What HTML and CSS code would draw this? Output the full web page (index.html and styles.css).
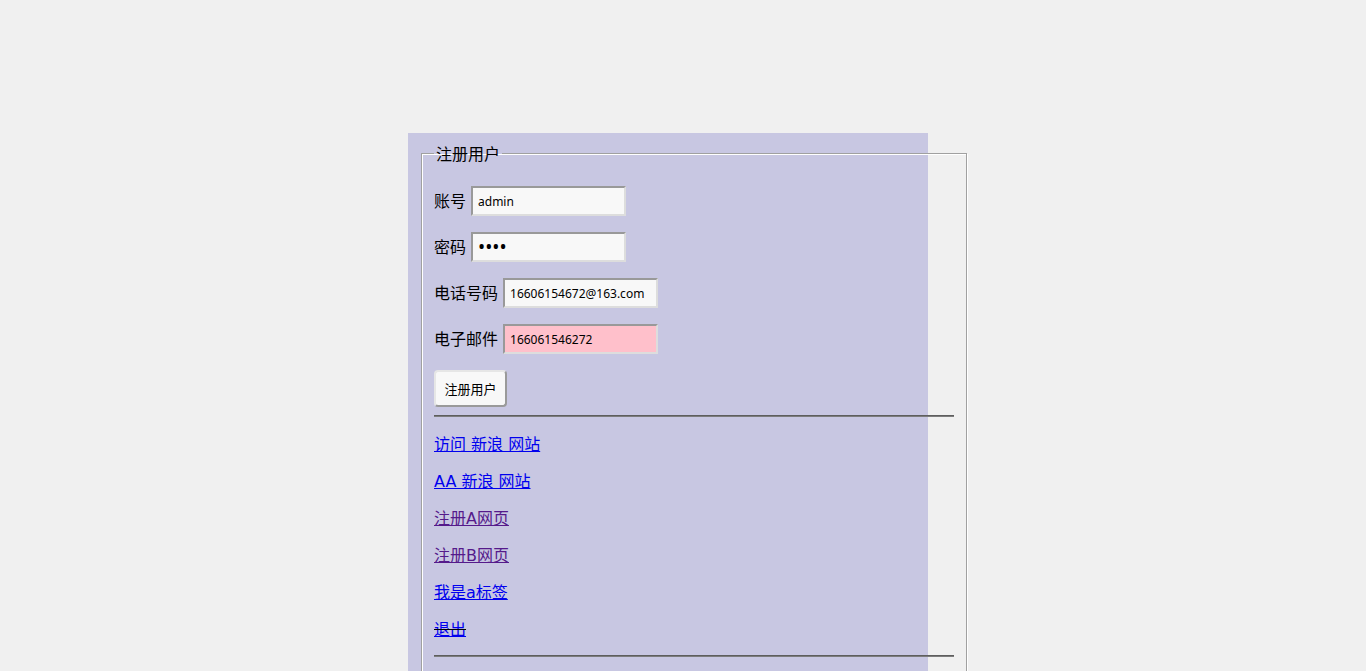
FILE: index.html
```html
<!DOCTYPE html>
<html lang="zh">
<head>
<meta charset="utf-8">
<title>注册用户</title>
<link rel="stylesheet" href="styles.css">
</head>
<body>
<div class="panel">
  <fieldset class="form-box">
    <legend class="legend">注册用户</legend>
    <div class="row">
      <label class="label">账号</label>
      <input class="field" type="text" value="admin">
    </div>
    <div class="row">
      <label class="label">密码</label>
      <input class="field field-pass" type="password" value="1234">
    </div>
    <div class="row">
      <label class="label">电话号码</label>
      <input class="field" type="text" value="16606154672@163.com">
    </div>
    <div class="row">
      <label class="label">电子邮件</label>
      <input class="field field-pink" type="text" value="166061546272">
    </div>
    <div class="row-btn">
      <button class="btn" type="button">注册用户</button>
    </div>
    <hr class="rule">
    <div class="links">
      <div class="link-line"><a class="link" href="#">访问 新浪 网站</a></div>
      <div class="link-line"><a class="link" href="#">AA 新浪 网站</a></div>
      <div class="link-line"><a class="link visited" href="#">注册A网页</a></div>
      <div class="link-line"><a class="link visited" href="#">注册B网页</a></div>
      <div class="link-line"><a class="link" href="#">我是a标签</a></div>
      <div class="link-line strike"><a class="link" href="#">退出</a></div>
    </div>
    <hr class="rule rule-last">
    <div class="spacer"></div>
  </fieldset>
</div>
</body>
</html>
```
FILE: styles.css
```css
html, body {
  margin: 0;
  padding: 0;
  background: #f0f0f0;
}
body {
  font-family: "DejaVu Sans", "Noto Sans CJK SC", sans-serif;
  font-size: 16px;
  color: #000;
  padding-top: 133px;
  padding-left: 408px;
}
.panel {
  width: 520px;
  background: #c8c7e2;
  padding-top: 9px;
  min-height: 600px;
}
.form-box {
  width: 520px;
  margin: 0 0 0 13px;
  padding: 6px 12px 0 12px;
  border: 1px solid #a0a0a0;
  box-shadow: inset 1px 1px 0 #ffffff, 1px 1px 0 #ffffff;
  box-sizing: content-box;
}
.legend {
  padding: 0 2px;
  line-height: 22px;
  font-size: 16px;
  font-family: "Noto Sans CJK SC", sans-serif;
}
.row {
  display: flex;
  align-items: center;
  gap: 5px;
  height: 30px;
  margin: 16px 0;
}
.label {
  line-height: 22px;
  margin-bottom: 2px;
  font-family: "Noto Sans CJK SC", sans-serif;
}
.field {
  box-sizing: border-box;
  width: 155px;
  height: 30px;
  margin: 0;
  padding: 0 5px;
  border-style: solid;
  border-width: 2px;
  border-color: #999 #ddd #ddd #999;
  background: #f8f8f8;
  font-family: "Noto Sans", "Noto Sans CJK SC", sans-serif;
  font-size: 12px;
  color: #000;
  outline: none;
}
.field-pass {
  font-size: 19px;
  letter-spacing: 0;
}
.field-pink {
  background: #ffc0cb;
}
.row-btn {
  margin: 16px 0 0 0;
  height: 37px;
}
.btn {
  box-sizing: border-box;
  width: 73px;
  height: 37px;
  margin: 0;
  padding: 0 0 1px 0;
  background: #f8f8f8;
  border: 2px solid;
  border-color: #e6e6e6 #9a9a9a #9a9a9a #e6e6e6;
  border-radius: 4px;
  font-family: "Noto Sans CJK SC", "Noto Sans", sans-serif;
  font-size: 13px;
  color: #000;
}
.rule {
  margin: 8px 0;
  height: 0;
  border: none;
  border-top: 1px solid #5e5e5e;
  border-bottom: 1px solid #7c7c7c;
}
.links {
  display: flex;
  flex-direction: column;
  padding-top: 1px;
}
.rule-last {
  margin-top: 7px;
}
.link-line {
  height: 37px;
  line-height: 37px;
}
.link {
  color: #0000ee;
  text-decoration: underline;
}
.link.visited {
  color: #551a8b;
}
.strike {
  color: #000;
  text-decoration: line-through;
}
.spacer {
  height: 40px;
}
```
